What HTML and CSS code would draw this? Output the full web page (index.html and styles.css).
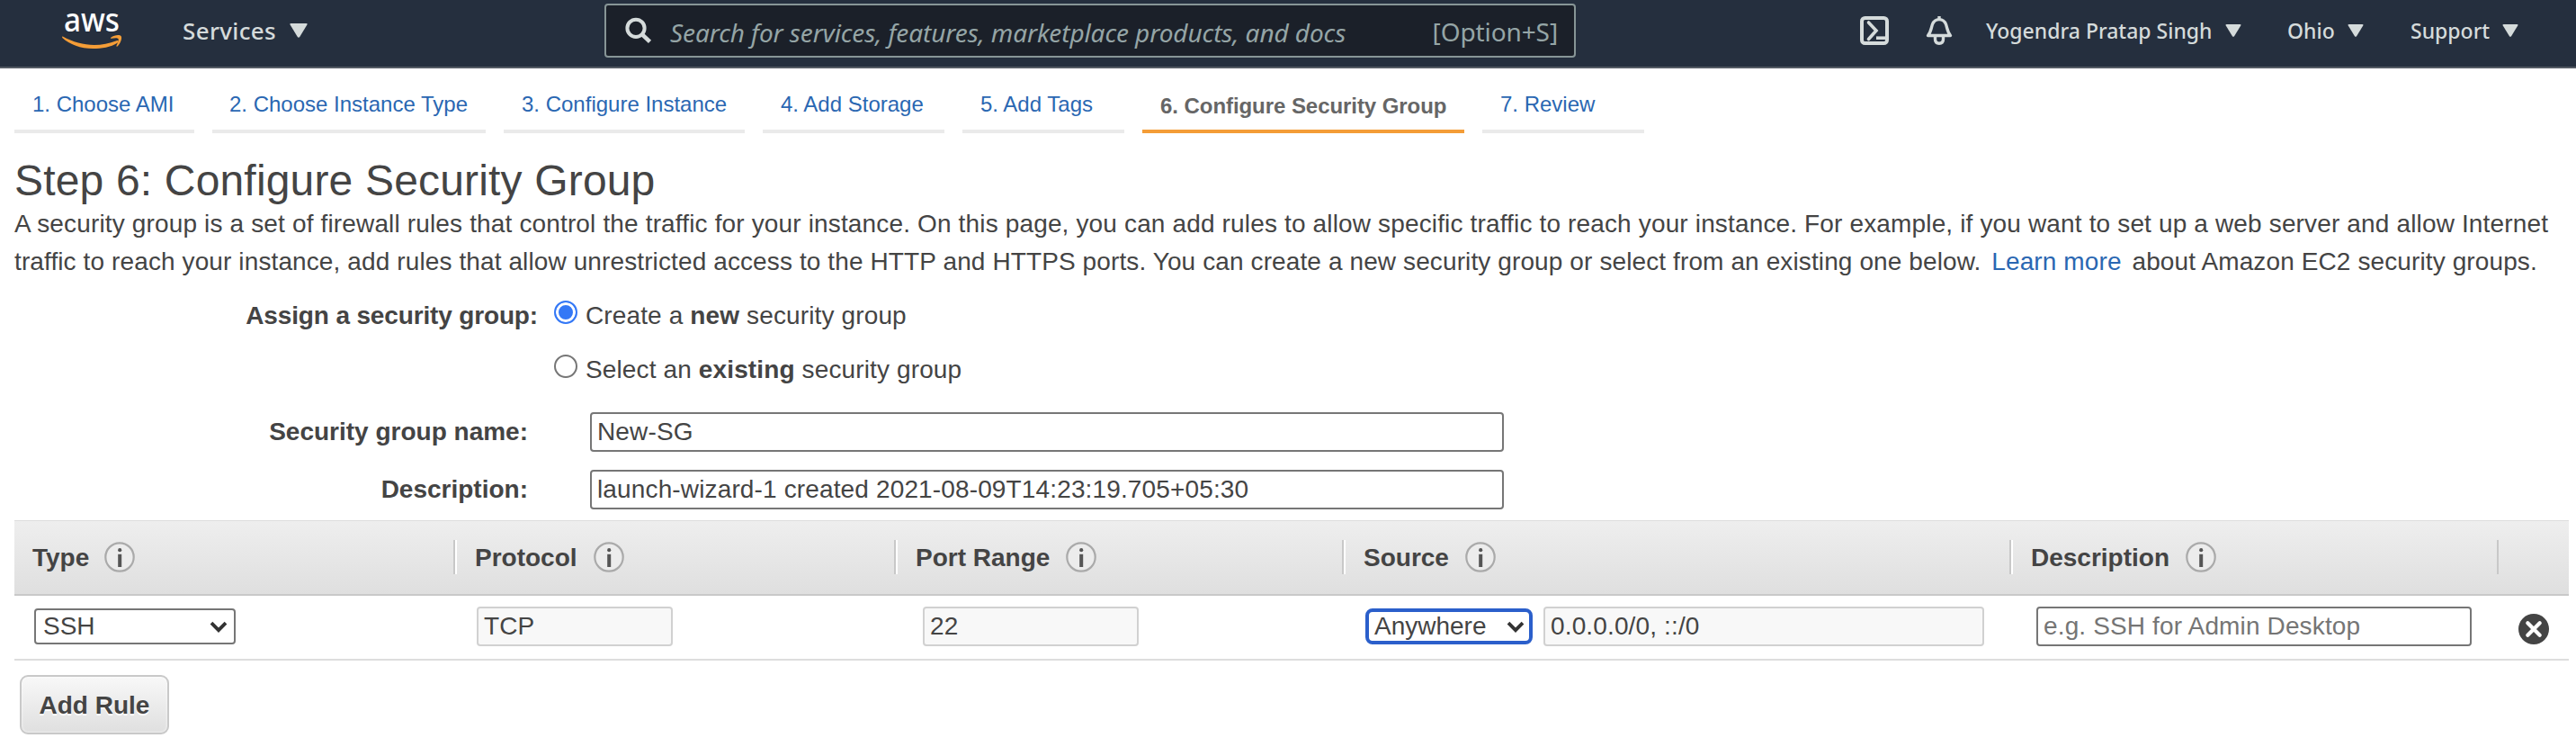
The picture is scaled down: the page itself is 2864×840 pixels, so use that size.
FILE: index.html
```
<!DOCTYPE html>
<html lang="en">
<head>
<meta charset="utf-8">
<title>Configure Security Group</title>
<link rel="stylesheet" href="styles.css">
</head>
<body>
<svg class="defs" width="0" height="0">
  <symbol id="tri" viewBox="0 0 20 16"><path d="M1.5 0H18.5Q20.3 0 19.4 1.6L11.2 15Q10 16.6 8.8 15L.6 1.6Q-.3 0 1.5 0Z" fill="#d5dbdb"/></symbol>
  <symbol id="info" viewBox="0 0 34 34"><circle cx="17" cy="17" r="15.7" fill="#ececec" stroke="#aaa" stroke-width="2.2"/><circle cx="17.2" cy="9.2" r="2.1" fill="#555"/><path d="M17.2 13.8V28" stroke="#555" stroke-width="4"/></symbol>
  <symbol id="chev" viewBox="0 0 20 13"><path d="M2 2.2L10 10.2L18 2.2" fill="none" stroke="#333" stroke-width="3.8"/></symbol>
</svg>
<header class="nav">
  <svg class="logo" width="68" height="56" viewBox="0 -12 68 56">
    <text class="logo-text" x="2" y="22.5" textLength="62" lengthAdjust="spacingAndGlyphs">aws</text>
    <path d="M.8 28.6C20 39.500 42 40.500 60.500 33.200C62.600 32.400 63.400 34.200 61.800 35.400C54 40.500 44 42 34.400 42C20.500 42 8.500 37.500.3 30Q-.3 28.300.8 28.600Z" fill="#f49d37"/>
    <path d="M54.2 29.800C58 26.600 64.500 26.400 65.700 28.200C67 30.200 65 36.500 61.500 39.400C60.800 40 60.100 39.700 60.500 38.800C61.600 36.200 63.400 32.300 62.500 31C61.500 29.800 57.500 30.400 55 30.800C54 30.900 53.600 30.400 54.200 29.800Z" fill="#f49d37"/>
  </svg>
  <a class="menu services"><span>Services</span><svg class="tri-lg"><use href="#tri"/></svg></a>
  <div class="search">
    <svg width="30" height="30" viewBox="0 0 30 30"><circle cx="12" cy="12.300" r="9.600" fill="none" stroke="#d5dbdb" stroke-width="4"/><path d="M18.500 18.800L27.500 27.300" stroke="#d5dbdb" stroke-width="4.600"/></svg>
    <span class="search-hint">Search for services, features, marketplace products, and docs</span>
    <span class="search-key">[Option+S]</span>
  </div>
  <div class="right">
    <svg class="shell" width="32" height="32" viewBox="0 0 32 32" fill="none" stroke="#d5dbdb"><rect x="2" y="2" width="28" height="28" rx="3.500" stroke-width="4"/><path d="M9.500 7L18 16L9.500 25.500" stroke-width="3.600" stroke-linecap="round"/><path d="M18 24.200H28" stroke-width="3.600"/></svg>
    <svg class="bell" width="32" height="32" viewBox="0 0 32 32" fill="none" stroke="#d5dbdb" stroke-width="3.400"><path d="M3.500 21.500C7 17.500 7 13 8.500 9C10 5 13 3.600 16 3.600S22 5 23.500 9C25 13 25 17.500 28.500 21.500Z" stroke-linejoin="round"/><path d="M16 0V4"/><path d="M11.500 22V25.500C11.500 28.500 13.200 30.200 16 30.200S20.500 28.500 20.500 25.500V22"/></svg>
    <a class="menu user"><span>Yogendra Pratap Singh</span><svg class="tri-sm"><use href="#tri"/></svg></a>
    <a class="menu region"><span>Ohio</span><svg class="tri-sm"><use href="#tri"/></svg></a>
    <a class="menu support"><span>Support</span><svg class="tri-sm"><use href="#tri"/></svg></a>
  </div>
</header>
<main>
  <nav class="tabs">
    <a class="tab t1">1. Choose AMI</a>
    <a class="tab t2">2. Choose Instance Type</a>
    <a class="tab t3">3. Configure Instance</a>
    <a class="tab t4">4. Add Storage</a>
    <a class="tab t5">5. Add Tags</a>
    <a class="tab t6 active">6. Configure Security Group</a>
    <a class="tab t7">7. Review</a>
  </nav>
  <h1>Step 6: Configure Security Group</h1>
  <p class="intro"><span class="wide">A security group is a set of firewall rules that control the traffic for your instance. On this page, you can add rules to allow specific traffic to reach your instance. For example, if you want to set up a web server and allow Internet</span><br>traffic to reach your instance, add rules that allow unrestricted access to the HTTP and HTTPS ports. You can create a new security group or select from an existing one below. <a class="link">Learn more</a> about Amazon EC2 security groups.</p>
  <section class="form">
    <div class="choice">
      <span class="label">Assign a security group:</span>
      <label class="option"><input type="radio" name="sg" checked><span>Create a <b>new</b> security group</span></label>
    </div>
    <div class="choice">
      <span class="label"></span>
      <label class="option"><input type="radio" name="sg"><span>Select an <b>existing</b> security group</span></label>
    </div>
    <div class="field"><span class="label">Security group name:</span><input class="box" value="New-SG"></div>
    <div class="field"><span class="label">Description:</span><input class="box" value="launch-wizard-1 created 2021-08-09T14:23:19.705+05:30"></div>
  </section>
  <section class="rules">
    <div class="grid head">
      <div class="th"><span>Type</span><svg><use href="#info"/></svg></div>
      <div class="th"><span>Protocol</span><svg><use href="#info"/></svg></div>
      <div class="th"><span>Port Range</span><svg><use href="#info"/></svg></div>
      <div class="th"><span>Source</span><svg><use href="#info"/></svg></div>
      <div class="th"><span>Description</span><svg><use href="#info"/></svg></div>
      <div class="th end"></div>
    </div>
    <div class="grid row">
      <div class="td type"><div class="select"><span>SSH</span><svg><use href="#chev"/></svg></div></div>
      <div class="td protocol"><input class="box off" value="TCP" readonly></div>
      <div class="td port"><input class="box off" value="22" readonly></div>
      <div class="td source"><div class="select focus"><span>Anywhere</span><svg><use href="#chev"/></svg></div><input class="box off" value="0.0.0.0/0, ::/0" readonly></div>
      <div class="td desc"><input class="box" placeholder="e.g. SSH for Admin Desktop"></div>
      <div class="td del"><svg width="34" height="34" viewBox="0 0 34 34"><circle cx="17" cy="17" r="17" fill="#444"/><path d="M10.300 10.300L23.700 23.700M23.700 10.300L10.300 23.700" stroke="#fff" stroke-width="4.200" stroke-linecap="round"/></svg></div>
    </div>
  </section>
  <button class="add">Add Rule</button>
</main>
</body>
</html>
```
FILE: styles.css
```
* { box-sizing: border-box; }
body { margin: 0; background: #fff; color: #444; font: 28px/42px "Liberation Sans", Arial, sans-serif; }
.defs { position: absolute; }
svg { display: block; flex: none; }

.nav { display: flex; height: 76px; background: #252f3e; border-bottom: 2px solid #545b64; color: #d5dbdb; font-family: "Noto Sans", sans-serif; font-weight: 500; }
.logo { margin-left: 69px; overflow: visible; }
.logo-text { font: 500 37px "Noto Sans", sans-serif; fill: #fff; }
.menu { display: flex; font-size: 23px; line-height: 34px; padding-top: 17px; white-space: nowrap; }
.services { margin-left: 66px; width: 469px; font-size: 26px; letter-spacing: .35px; }
.tri-lg { width: 20px; height: 16px; margin: 9px 0 0 15px; }
.tri-sm { width: 18px; height: 14px; margin: 10px 0 0 14px; }
.search { display: flex; width: 1080px; height: 60px; margin-top: 4px; padding: 13px 18px 0 21px; background: #1b2029; border: 2px solid #879596; border-radius: 4px; color: #95a5a6; font-size: 28px; line-height: 34px; white-space: nowrap; font-weight: 400; }
.search-hint { margin-left: 20px; font-style: italic; letter-spacing: -.1px; }
.search-key { margin: -1px 0 0 auto; letter-spacing: -.1px; }
.right { display: flex; margin-left: 316px; }
.shell, .bell { margin-top: 18px; }
.bell { margin-left: 40px; }
.user { width: 335px; margin-left: 36px; }
.region { width: 137px; }

main { padding: 26px 8px 0 16px; }
.tabs { display: flex; gap: 20px; }
.tab { height: 46px; padding-left: 20px; border-bottom: 4px solid #eaeaea; color: #2a67b2; font-size: 24px; line-height: 28px; white-space: nowrap; }
.t1 { width: 200px; }
.t2 { width: 304px; padding-left: 19px; }
.t3 { width: 268px; }
.t4 { width: 202px; }
.t5 { width: 180px; }
.t6 { width: 358px; }
.t7 { width: 180px; }
.tab.active { padding-top: 2px; border-color: #f49d37; color: #666; font-weight: bold; letter-spacing: -.06px; }
h1 { margin: 26px 0 0; font-size: 48px; font-weight: normal; line-height: 54px; letter-spacing: .17px; }
.intro { margin: 0; white-space: nowrap; letter-spacing: .111px; }
.wide { letter-spacing: .15px; }
.link { color: #2a67b2; margin: 0 4px; }

.choice { display: flex; height: 42px; margin-top: 18px; line-height: 44px; }
.choice:first-child { margin-top: 17px; }
.label { font-weight: bold; text-align: right; white-space: nowrap; }
.choice .label { width: 582px; letter-spacing: -.15px; }
.option { display: flex; margin-left: 18px; letter-spacing: .13px; }
.option input { appearance: none; width: 26px; height: 26px; margin: 5px 9px 0 0; border: 2px solid #767676; border-radius: 50%; background: #fff; }
.option input:checked { border: 2px solid #3478f6; background: #3478f6; box-shadow: inset 0 0 0 3px #fff; }
.field { display: flex; align-items: center; height: 44px; margin-top: 20px; line-height: 44px; }
.choice + .field { margin-top: 27px; }
.field .label { width: 571px; margin-right: 69px; }
.box { width: 100%; height: 44px; padding: 0 6px; border: 2px solid #767676; border-radius: 4px; background: #fff; color: #444; font: 28px "Liberation Sans", Arial, sans-serif; letter-spacing: .14px; outline: none; }
.box::placeholder { color: #757575; opacity: 1; }
.field .box { width: 1016px; }
.off { border-color: #d1d1d1; background: #f8f8f8; }

.rules { margin-top: 12px; }
.grid { display: grid; grid-template-columns: 488px 490px 498px 742px 542px 80px; }
.head { height: 84px; border-top: 1px solid #ddd; border-bottom: 2px solid #c9c9c9; background: linear-gradient(#eee, #dfdfdf); font-weight: bold; }
.th { display: flex; align-items: center; gap: 18px; height: 38px; margin-top: 21px; padding-left: 20px; border-left: 2px solid #c8c8c8; box-shadow: inset 2px 0 #fff; white-space: nowrap; }
.th + .th { padding-left: 22px; }
.th:first-child { gap: 17px; border: 0; box-shadow: none; }
.th.end { box-shadow: none; }
.th span { padding-top: 2px; }
.th svg { width: 34px; height: 34px; }
.row { height: 72px; padding-bottom: 2px; border-bottom: 2px solid #ddd; align-items: center; }
.td { display: flex; align-items: center; }
.type { padding-left: 22px; }
.protocol { padding-left: 26px; }
.port { padding-left: 32px; }
.source { padding-left: 26px; gap: 12px; }
.desc { padding-left: 30px; }
.del { padding: 6px 0 0 24px; }
.select { display: flex; align-items: center; justify-content: space-between; width: 224px; height: 40px; padding: 0 7px 0 8px; border: 2px solid #767676; border-radius: 4px; line-height: 36px; }
.select svg { width: 20px; height: 13px; }
.focus { width: 186px; padding: 0 5px 0 6px; border: 4px solid #2b5fcb; border-radius: 8px; }
.protocol .box { width: 218px; }
.port .box { width: 240px; }
.source .box { width: 490px; }
.desc .box { width: 484px; }
.add { display: block; width: 166px; height: 66px; margin: 16px 0 0 6px; padding: 2px 0 0; border: 2px solid #c9c9c9; border-radius: 9px; background: linear-gradient(#f8f8f8, #dfdfdf); box-shadow: inset 0 0 3px #fff; color: #444; font: bold 28px "Liberation Sans", Arial, sans-serif; text-shadow: 0 2px #fff; }
```
